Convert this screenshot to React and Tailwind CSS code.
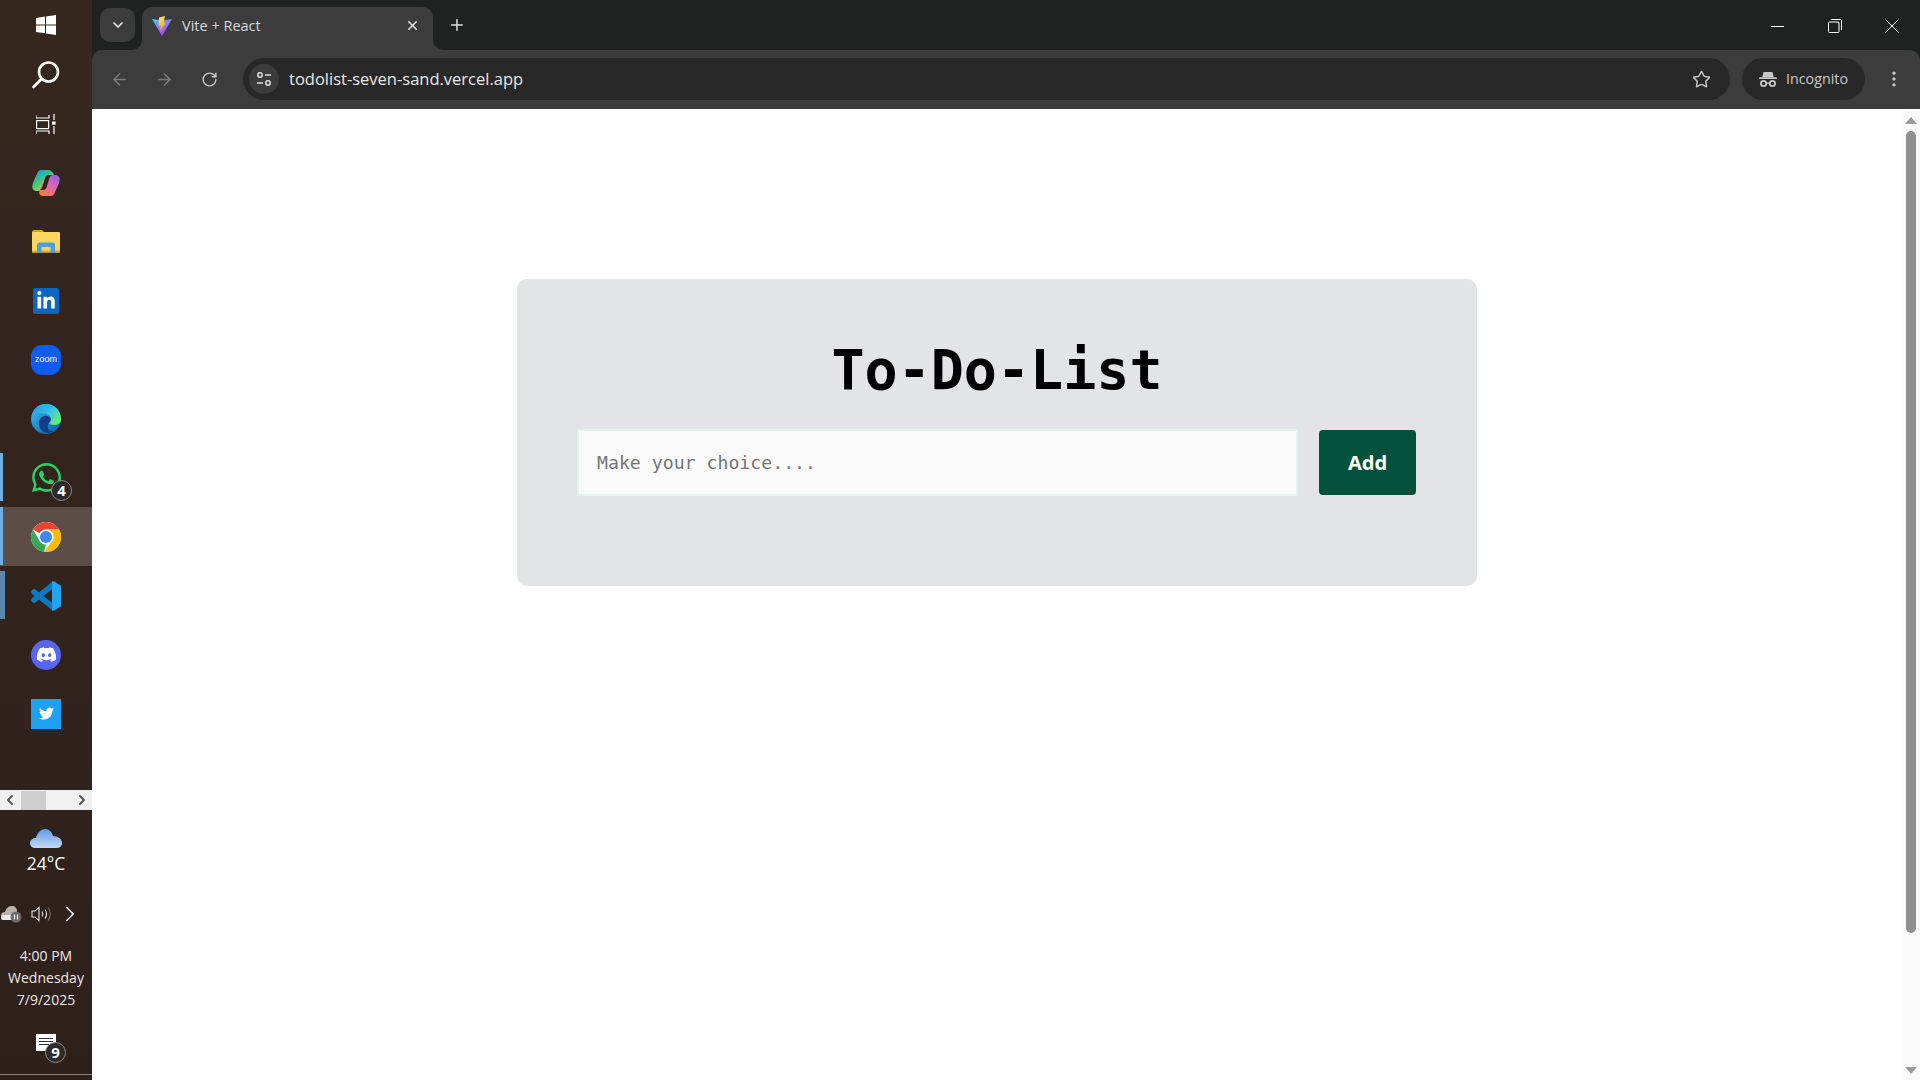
import { ArrowLeft, ArrowRight, RotateCw, Star, X, Plus, ChevronDown, ChevronLeft, ChevronRight, EllipsisVertical } from "lucide-react";
import { FaDiscord, FaLinkedinIn, FaTwitter, FaWhatsapp } from "react-icons/fa";

const UI_FONT = "font-['Open_Sans','Noto_Sans',sans-serif]";
const MONO_FONT = "font-['DejaVu_Sans_Mono',monospace]";

function WindowsLogo() {
    return (
        <svg width="20" height="20" viewBox="0 0 20 20" fill="#fff">
            <polygon points="0,3 9,1.6 9,9.4 0,9.4" />
            <polygon points="10,1.4 20,0 20,9.4 10,9.4" />
            <polygon points="0,10.4 9,10.4 9,18.2 0,17" />
            <polygon points="10,10.4 20,10.4 20,20 10,18.6" />
        </svg>
    );
}

function SearchIcon() {
    return (
        <svg width="30" height="30" viewBox="0 0 30 30" fill="none" stroke="#fff" strokeWidth="2.6" strokeLinecap="round">
            <circle cx="17.5" cy="12" r="9.5" />
            <line x1="10.5" y1="19" x2="2.5" y2="27" />
        </svg>
    );
}

function TaskViewIcon() {
    return (
        <svg width="20" height="20" viewBox="0 0 20 20" fill="none" stroke="#fff" strokeWidth="1.2">
            <path d="M0 1 V4 H13 V1" />
            <rect x="0.6" y="6.6" width="12" height="8" />
            <path d="M0 20 V17 H13 V20" />
            <path d="M18 0 V6 M18 12 V20" />
            <rect x="16" y="7.5" width="3.6" height="3.2" fill="#fff" stroke="none" />
        </svg>
    );
}

function CopilotIcon() {
    return (
        <svg width="28" height="28" viewBox="0 0 28 28">
            <defs>
                <linearGradient id="cpa" x1="0.1" y1="0" x2="0.8" y2="1">
                    <stop offset="0" stopColor="#1593ea" />
                    <stop offset="0.5" stopColor="#45c97a" />
                    <stop offset="1" stopColor="#f5d018" />
                </linearGradient>
                <linearGradient id="cpb" x1="0.8" y1="0" x2="0.2" y2="1">
                    <stop offset="0" stopColor="#9a5fe0" />
                    <stop offset="0.55" stopColor="#e56aa8" />
                    <stop offset="1" stopColor="#f5793c" />
                </linearGradient>
            </defs>
            <path d="M9 1 H16 C19 1 21 3 22 6 L16 22 H5 C2 22 0 20 0.300 17 C1 13 3 9 5 5 C6 2.500 7 1 9 1 Z" fill="url(#cpa)" />
            <path d="M19 27 H11 C9 27 7.500 26 7 24 L8 20 L14 6 H23 C26 6 28 8 27.700 11 C27 15 25 19 23 23 C22 25.500 21 27 19 27 Z" fill="url(#cpb)" />
            <path d="M16 6 C14.500 6 13.800 7 13.300 8.500 L10.500 17.500 C10 19 9.500 20 8 21 H11.500 C13 21 14 20 14.500 18.500 L17.500 9 C18 7.500 18.500 6.500 20 6 Z" fill="#33241e" />
        </svg>
    );
}

function FolderIcon() {
    return (
        <svg width="28" height="24" viewBox="0 0 28 24">
            <path d="M0 2 C0 1 1 0 2 0 H10 L13 3 H0 Z" fill="#d99e0b" />
            <rect x="0" y="2" width="28" height="20.500" rx="1" fill="#fbd75f" />
            <rect x="0" y="20.500" width="28" height="2" fill="#e3ac1c" />
            <path d="M5 23 V15 C5 13.500 6 12.500 7.500 12.500 H20.500 C22 12.500 23 13.500 23 15 V23 H18.500 V17 H9.500 V23 Z" fill="#4a9fe0" />
        </svg>
    );
}

function EdgeIcon() {
    return (
        <svg width="30" height="30" viewBox="0 0 30 30">
            <defs>
                <linearGradient id="edgeA" x1="0" y1="0" x2="1" y2="1">
                    <stop offset="0" stopColor="#35c1f1" />
                    <stop offset="1" stopColor="#0c59a4" />
                </linearGradient>
                <linearGradient id="edgeB" x1="0" y1="0" x2="1" y2="0.6">
                    <stop offset="0" stopColor="#1b9de2" />
                    <stop offset="0.6" stopColor="#35c1f1" />
                    <stop offset="1" stopColor="#66eb6e" />
                </linearGradient>
            </defs>
            <circle cx="15" cy="15" r="15" fill="url(#edgeA)" />
            <path d="M2 8 C5 2 10 0 15 0 C24 0 30 7 30 15 C30 19 27 21 23 21 C20 21 18 20 18 19 C21 17 21 12 16 10 C10 8 5 10 2 8 Z" fill="url(#edgeB)" />
            <path d="M18 19 C15 22 17 28 22 27 C18 31 9 29 8 21 C7 15 12 11 16 12 C20 13 21 16 18 19 Z" fill="#0f3f86" />
        </svg>
    );
}

function ChromeIcon() {
    return (
        <svg width="30" height="30" viewBox="0 0 30 30">
            <circle cx="15" cy="15" r="15" fill="#fff" />
            <path d="M15 0 A15 15 0 0 1 28 7.500 H15 A7.500 7.500 0 0 0 8.500 11.250 L2 7.500 A15 15 0 0 1 15 0 Z" fill="#ea4335" />
            <path d="M2 7.500 L8.500 18.750 A7.500 7.500 0 0 0 15 22.500 L13 29.900 A15 15 0 0 1 2 7.500 Z" fill="#34a853" />
            <path d="M28 7.500 A15 15 0 0 1 13 29.900 L21.500 18.750 A7.500 7.500 0 0 0 21.500 11.250 L15 7.500 Z" fill="#fbbc04" />
            <circle cx="15" cy="15" r="7.500" fill="#fff" />
            <circle cx="15" cy="15" r="6" fill="#4285f4" />
        </svg>
    );
}

function VsCodeIcon() {
    return (
        <svg width="30" height="30" viewBox="0 0 30 30">
            <path d="M23 3 L3 19 M23 27 L3 11" stroke="#0e79c0" strokeWidth="5.500" strokeLinecap="round" fill="none" />
            <path d="M21 0 L29 4 C29.600 4.300 30 5 30 5.600 V24.400 C30 25 29.600 25.700 29 26 L21 30 Z" fill="#24a4ee" />
        </svg>
    );
}

function CloudIcon() {
    return (
        <svg width="32" height="22" viewBox="0 0 32 22">
            <defs>
                <linearGradient id="cloud" x1="0" y1="0" x2="0" y2="1">
                    <stop offset="0" stopColor="#5f9ce8" />
                    <stop offset="1" stopColor="#c3d8f3" />
                </linearGradient>
            </defs>
            <path d="M6 20 C2 20 0 18 0 15 C0 12 3 10 6 10 C7 5 11 1 15 1 C19 1 22 4 23 8 C28 8 32 11 32 15 C32 18 30 20 26 20 Z" fill="url(#cloud)" />
        </svg>
    );
}

function IncognitoIcon() {
    return (
        <svg width="18" height="16" viewBox="0 0 20 18" fill="#c8c8c8">
            <path d="M5 1 H15 L16.500 7 H3.500 Z" />
            <rect x="0" y="7" width="20" height="2" rx="0.5" />
            <circle cx="5" cy="14" r="3" fill="none" stroke="#c8c8c8" strokeWidth="2" />
            <circle cx="15" cy="14" r="3" fill="none" stroke="#c8c8c8" strokeWidth="2" />
            <rect x="8" y="13" width="4" height="1.500" />
        </svg>
    );
}

function SiteInfoIcon() {
    return (
        <svg width="16" height="16" viewBox="0 0 16 16" fill="none" stroke="#e0e0e0" strokeWidth="1.500">
            <circle cx="4" cy="4" r="2.200" />
            <line x1="9" y1="4" x2="15" y2="4" />
            <line x1="1" y1="12" x2="7" y2="12" />
            <circle cx="12" cy="12" r="2.200" />
        </svg>
    );
}

function ViteLogo() {
    return (
        <svg width="20" height="20" viewBox="0 0 20 20">
            <defs>
                <linearGradient id="viteA" x1="0" y1="0" x2="0.6" y2="1">
                    <stop offset="0" stopColor="#41d1ff" />
                    <stop offset="1" stopColor="#bd34fe" />
                </linearGradient>
                <linearGradient id="viteB" x1="0" y1="0" x2="0.3" y2="1">
                    <stop offset="0" stopColor="#ffea83" />
                    <stop offset="1" stopColor="#ffa800" />
                </linearGradient>
            </defs>
            <polygon points="0,3 10,4.500 20,3 10,20" fill="url(#viteA)" />
            <polygon points="13,0 7,1.500 6.500,10 9,9.500 8,15 14,6.500 11.500,7 " fill="url(#viteB)" />
        </svg>
    );
}

function TrayBadge({ value, className }) {
    return (
        <span className={`absolute flex items-center justify-center rounded-full border border-[#8a8a8a] bg-[#2b2b2b] text-[15px] leading-none font-bold text-white ${className}`}>
            {value}
        </span>
    );
}

function AppSlot({ children, active, indicator }) {
    return (
        <div className={`relative flex h-[59px] items-center justify-center ${active ? "bg-[#5c4e46]" : ""}`}>
            {indicator && <span className={`absolute top-[5px] left-0 bg-[#6cb1e6] ${indicator}`} />}
            {children}
        </div>
    );
}

function Taskbar() {
    return (
        <aside className={`flex h-full w-[92px] shrink-0 flex-col bg-gradient-to-b from-[#36271f] to-[#2e201b] text-white ${UI_FONT}`}>
            <div className="flex h-[50px] items-center justify-center"><WindowsLogo /></div>
            <div className="flex h-[49px] items-center justify-center"><SearchIcon /></div>
            <div className="flex h-[49px] items-center justify-center"><TaskViewIcon /></div>
            <div className="flex h-[5px]" />
            <AppSlot><CopilotIcon /></AppSlot>
            <AppSlot><FolderIcon /></AppSlot>
            <AppSlot>
                <div className="flex h-[26px] w-[26px] items-center justify-center rounded-[2px] bg-[#0a66c2]"><FaLinkedinIn size={20} color="#fff" /></div>
            </AppSlot>
            <AppSlot>
                <div className="flex h-[30px] w-[30px] items-center justify-center rounded-[11px] bg-[#0f5cf0] font-['Liberation_Sans',sans-serif] text-[9px] leading-none text-white">zoom</div>
            </AppSlot>
            <AppSlot><EdgeIcon /></AppSlot>
            <AppSlot indicator="h-[48px] w-[3px]">
                <FaWhatsapp size={33} color="#25d366" />
                <TrayBadge value="4" className="top-[32px] left-[51px] h-[21px] w-[21px]" />
            </AppSlot>
            <AppSlot active indicator="!top-0 h-[58px] w-[3px]"><ChromeIcon /></AppSlot>
            <AppSlot indicator="h-[48px] w-[5px] opacity-70"><VsCodeIcon /></AppSlot>
            <AppSlot>
                <div className="flex h-[30px] w-[30px] items-center justify-center rounded-full bg-[#5865f2]"><FaDiscord size={21} color="#fff" /></div>
            </AppSlot>
            <AppSlot>
                <div className="flex h-[30px] w-[30px] items-center justify-center bg-[#1da1f2]"><FaTwitter size={15} color="#fff" /></div>
            </AppSlot>

            <div className="mt-[47px] flex h-[20px] items-center bg-[#f0f0f0] text-[#555]">
                <ChevronLeft size={16} strokeWidth={3} className="ml-[2px]" />
                <div className="ml-[3px] h-[19px] w-[25px] bg-[#cdcdcd]" />
                <ChevronRight size={16} strokeWidth={3} className="ml-auto mr-[2px]" />
            </div>

            <div className="mt-[18px] flex flex-col items-center">
                <CloudIcon />
                <span className="mt-[2px] text-[17.5px] leading-[22px]">24°C</span>
            </div>

            <div className="relative mt-[28px] flex h-[24px] items-center">
                <svg width="22" height="18" viewBox="0 0 22 18" className="ml-[1px]">
                    <path d="M3 13 C1 13 0 12 0 10 C0 8 2 7 4 7 C5 3 8 1 11 1 C14 1 16 3 16 6 V13 Z" fill="#b8b2ae" />
                    <rect x="0" y="10" width="12" height="5" rx="2" fill="#eee" />
                    <circle cx="15" cy="12" r="5.500" fill="#6b6b6b" />
                    <path d="M13.500 9.500 V14.500 M16.500 9.500 V14.500" stroke="#fff" strokeWidth="1.200" />
                </svg>
                <svg width="20" height="16" viewBox="0 0 20 16" fill="none" stroke="#e8e8e8" strokeWidth="1.100" className="ml-[8px]">
                    <path d="M1 5 H4 L8 1.500 V14.500 L4 11 H1 Z" />
                    <path d="M11 5.500 C12 7 12 9 11 10.500" />
                    <path d="M14 3.500 C16 6 16 10 14 12.500" />
                    <path d="M17 1.500 C20 5 20 11 17 14.500" stroke="#7a706a" />
                </svg>
                <ChevronRight size={26} strokeWidth={1.200} className="ml-[6px]" />
            </div>

            <div className="mt-[19px] flex flex-col items-center text-[14px] leading-[22px] text-[#eeeae8]">
                <span>4:00 PM</span>
                <span>Wednesday</span>
                <span>7/9/2025</span>
            </div>

            <div className="relative mt-[22px] flex h-[30px] justify-center">
                <div className="mt-[1px] flex h-[17px] w-[20px] flex-col gap-[2px] bg-white px-[3px] pt-[4px]">
                    <span className="h-[1px] bg-[#333]" />
                    <span className="h-[1px] bg-[#333]" />
                    <span className="h-[1px] bg-[#333]" />
                </div>
                <TrayBadge value="9" className="top-[9px] left-[45px] h-[21px] w-[21px]" />
            </div>
            <div className="mt-auto mb-[5px] h-[1px] bg-[#8a807a]" />
        </aside>
    );
}

function TabStrip() {
    return (
        <div className={`flex h-[50px] shrink-0 items-end bg-[#202222] pl-[8px] ${UI_FONT}`}>
            <div className="mb-[8px] flex h-[34px] w-[35px] items-center justify-center rounded-[10px] bg-[#3c3c3c] text-[#e8e8e8]">
                <ChevronDown size={16} strokeWidth={2.500} />
            </div>
            <div className="relative ml-[7px] flex h-[43px] w-[291px] items-center rounded-t-[10px] bg-[#3c3c3c] pr-[13px] pb-[6px] pl-[10px]">
                <ViteLogo />
                <span className="ml-[10px] text-[14.5px] text-[#d8d8d8]">Vite + React</span>
                <X size={15} strokeWidth={2.500} className="ml-auto text-[#e0e0e0]" />
                <span className="absolute -right-[10px] bottom-0 h-[10px] w-[10px] bg-[#3c3c3c]">
                    <span className="block h-full w-full rounded-bl-[10px] bg-[#202222]" />
                </span>
                <span className="absolute -left-[10px] bottom-0 h-[10px] w-[10px] bg-[#3c3c3c]">
                    <span className="block h-full w-full rounded-br-[10px] bg-[#202222]" />
                </span>
            </div>
            <Plus size={18} strokeWidth={2} className="mb-[16px] ml-[15px] text-[#e0e0e0]" />
            <div className="mb-[17px] ml-auto flex w-[149px] items-center text-white">
                <svg width="13" height="13" viewBox="0 0 13 13" stroke="#fff" strokeWidth="1">
                    <line x1="0" y1="6.500" x2="13" y2="6.500" />
                </svg>
                <svg width="14" height="14" viewBox="0 0 14 14" fill="none" stroke="#fff" strokeWidth="1" className="ml-[44px]">
                    <rect x="0.500" y="3" width="10.500" height="10.500" rx="1" />
                    <path d="M3 1 C3 0.700 3.300 0.500 4 0.500 H12 C13 0.500 13.500 1 13.500 2 V10 C13.500 10.700 13.300 11 13 11" />
                </svg>
                <svg width="14" height="14" viewBox="0 0 14 14" stroke="#fff" strokeWidth="1" className="ml-[43px]">
                    <path d="M0.500 0.500 L13.500 13.500 M13.500 0.500 L0.500 13.500" />
                </svg>
            </div>
        </div>
    );
}

function Toolbar() {
    return (
        <div className={`flex h-[59px] shrink-0 items-center rounded-t-[10px] bg-[#3c3c3c] pb-[1px] ${UI_FONT}`}>
            <ArrowLeft size={19} strokeWidth={2} className="ml-[18px] text-[#7b7b7b]" />
            <ArrowRight size={19} strokeWidth={2} className="ml-[26px] text-[#7b7b7b]" />
            <RotateCw size={17} strokeWidth={2} className="ml-[27px] text-[#c8c8c8]" />
            <div className="ml-[25px] flex h-[42px] w-[1487px] items-center rounded-full bg-[#282828] pl-[6px]">
                <div className="flex h-[30px] w-[30px] items-center justify-center rounded-full bg-[#3c3c3c]"><SiteInfoIcon /></div>
                <span className="ml-[10px] text-[16.5px] text-[#e8e8e8]">todolist-seven-sand.vercel.app</span>
                <Star size={19} strokeWidth={1.800} className="mr-[19px] ml-auto text-[#c8c8c8]" />
            </div>
            <div className="ml-[12px] flex h-[42px] w-[123px] items-center rounded-full bg-[#282828] pb-[1px] pl-[17px]">
                <IncognitoIcon />
                <span className="ml-[9px] text-[14.3px] text-[#c8c8c8]">Incognito</span>
            </div>
            <EllipsisVertical size={20} strokeWidth={2} className="ml-[19px] text-[#c8c8c8]" />
        </div>
    );
}

function Scrollbar() {
    return (
        <div className="flex w-[18px] shrink-0 flex-col items-center bg-[#fafafa]">
            <span className="mt-[8px] h-0 w-0 border-x-[6px] border-b-[7px] border-x-transparent border-b-[#9a9a9a]" />
            <div className="mt-[7px] ml-[-1px] h-[802px] w-[10px] rounded-full bg-[#8f8f8f]" />
            <span className="mt-auto mb-[6px] h-0 w-0 border-x-[6px] border-t-[7px] border-x-transparent border-t-[#9a9a9a]" />
        </div>
    );
}

function TodoCard() {
    return (
        <section className={`mx-auto mt-[170px] flex h-[307px] w-[960px] flex-col rounded-[10px] bg-[#e3e4e6] px-[60px] pt-[54px] ${MONO_FONT}`}>
            <h1 className="text-center text-[55px] leading-[74px] font-bold text-black">To-Do-List</h1>
            <div className="mt-[22px] flex items-center gap-[21px]">
                <input
                    type="text"
                    placeholder="Make your choice...."
                    className="h-[67px] w-[721px] border-2 border-[#e2f5ec] bg-[#fafafa] px-[18px] text-[18.2px] text-black outline-none placeholder:text-[#757575]"
                />
                <button className="h-[65px] w-[97px] rounded-[4px] bg-[#02513c] font-['Noto_Sans',sans-serif] text-[20px] font-bold text-white">Add</button>
            </div>
        </section>
    );
}

export default function App() {
    return (
        <div className="flex h-screen w-full overflow-hidden bg-white">
            <Taskbar />
            <div className="flex min-w-0 flex-1 flex-col bg-[#202222]">
                <TabStrip />
                <Toolbar />
                <div className="flex min-h-0 flex-1 bg-white">
                    <main className="min-w-0 flex-1">
                        <TodoCard />
                    </main>
                    <Scrollbar />
                </div>
            </div>
        </div>
    );
}
